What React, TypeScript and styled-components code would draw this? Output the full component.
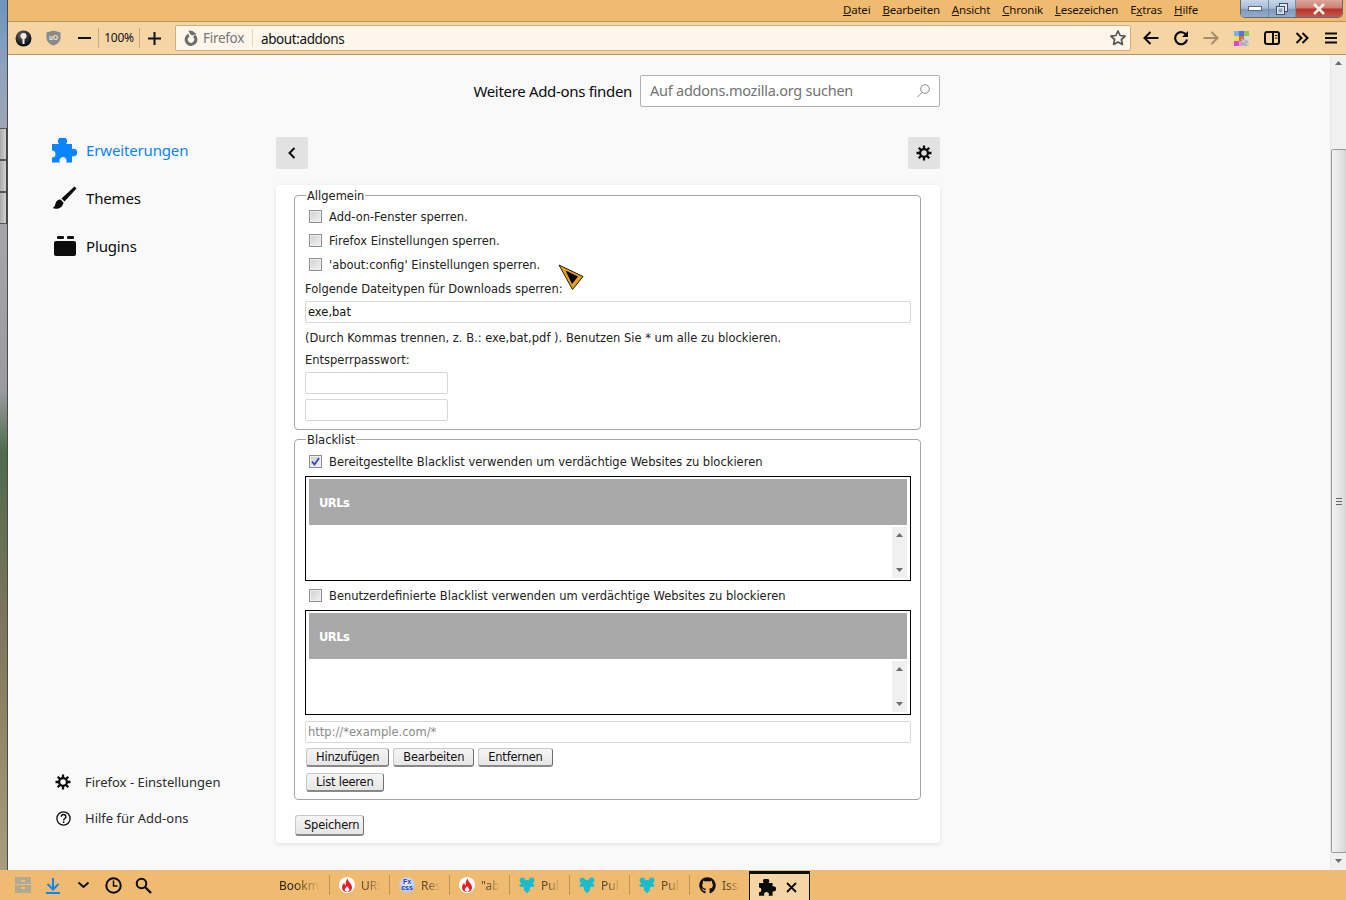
import React from "react";
import styled, { createGlobalStyle } from "styled-components";
import { FaGithub } from "react-icons/fa";

const Global = createGlobalStyle`
  html, body { margin: 0; padding: 0; height: 100%; overflow: hidden; }
  body { font-family: "Noto Sans", "Open Sans", sans-serif; color: #0c0c0d; }
  * { box-sizing: border-box; }
`;

const Page = styled.div`
  width: 1346px; height: 900px; display: flex; overflow: hidden; position: relative; background: #efbb70;
`;
const DesktopEdge = styled.div`
  width: 8px; height: 870px; flex: none; display: flex; flex-direction: column;
  background: linear-gradient(180deg, #6f93bd 0%, #8ea3bd 8%, #a9a9ad 20%, #9a9aa0 45%, #4f6b4b 52%, #7b7458 70%, #a89c80 100%);
  border-right: 1px solid #4a4a4a;
`;
const EdgeTabs = styled.div`
  margin-top: 128px; display: flex; flex-direction: column;
`;
const EdgeTab = styled.div`
  height: 32px; background: linear-gradient(90deg, #aaa, #d2d2d2); border-top: 1px solid #555; border-bottom: 1px solid #555; border-right: 1px solid #444;
`;
const Win = styled.div`
  flex: 1; min-width: 0; display: flex; flex-direction: column; height: 900px;
`;
const MenuBar = styled.div`
  height: 22px; flex: none; background: #efbb70; border-bottom: 1px solid #bb9257;
  display: flex; justify-content: flex-end; align-items: flex-start;
  font-size: 11.5px; color: #1a1407; position: relative;
`;
const Menus = styled.div`
  display: flex; gap: 12px; margin-right: 42px; padding-top: 1px; line-height: 17px; letter-spacing: -0.2px;
  u { text-underline-offset: 1px; }
`;
const Caption = styled.div`
  display: flex; height: 18px; width: 103px; margin-right: 3px; border: 1px solid #5b6b80; border-top: none;
  border-radius: 0 0 5px 5px; overflow: hidden;
`;
const CapBtn = styled.div<{ $w: number; $kind?: string }>`
  width: ${p => p.$w}px; display: flex; align-items: center; justify-content: center;
  border-right: 1px solid #7a8aa0;
  background: ${p => p.$kind === "close"
    ? "linear-gradient(180deg, #d9a79c 0%, #cf7f70 45%, #b73328 55%, #c45a4a 100%)"
    : "linear-gradient(180deg, #c7d6e8 0%, #a9bdd6 48%, #7f99bb 55%, #93acc9 100%)"};
  &:last-child { border-right: none; }
`;
const NavBar = styled.div`
  height: 33px; flex: none; background: #f6d5a5; border-bottom: 1px solid #bb9257;
  display: flex; align-items: center; position: relative;
`;
const NavBtn = styled.div<{ $w?: number }>`
  width: ${p => p.$w ?? 30}px; height: 30px; flex: none; display: flex; align-items: center; justify-content: center;
`;
const ZoomGroup = styled.div`
  display: flex; align-items: center; height: 20px;
`;
const ZoomLabel = styled.div`
  width: 42px; height: 20px; border-left: 1px solid #c9a97a; border-right: 1px solid #c9a97a;
  font-size: 12px; line-height: 20px; text-align: center; color: #111; letter-spacing: -0.25px;
`;
const UrlBar = styled.div`
  width: 956px; height: 26px; flex: none; margin: 0 5px 0 7px; background: #fef6eb;
  border: 1px solid #cfae80; border-radius: 2px; display: flex; align-items: center; padding-left: 7px;
`;
const Identity = styled.div`
  display: flex; align-items: center; gap: 4px; height: 18px; padding-right: 8px; border-right: 1px solid #e3d6c2;
  color: #777; font-size: 13.5px; letter-spacing: -0.3px; line-height: 20px;
`;
const UrlText = styled.div`
  margin-left: 8px; flex: 1; color: #111; font-size: 13.5px; letter-spacing: -0.4px; padding-top: 2px;
`;
const Body = styled.div`
  flex: 1; min-height: 0; display: flex; background: #f9f9fa;
`;
const Content = styled.div`
  flex: 1; min-width: 0; display: flex; position: relative;
`;
const Sidebar = styled.nav`
  width: 268px; flex: none; display: flex; flex-direction: column; justify-content: space-between;
  padding: 71px 0 34px 44px;
`;
const CatList = styled.div` display: flex; flex-direction: column; `;
const Cat = styled.div<{ $active?: boolean }>`
  height: 48px; display: flex; align-items: center; font-size: 15px; letter-spacing: -0.15px; gap: 9px;
  color: ${p => (p.$active ? "#0a84ff" : "#0c0c0d")};
`;
const CatIcon = styled.div`
  width: 25px; height: 25px; display: flex; align-items: center; justify-content: center; flex: none;
`;
const FootList = styled.div` display: flex; flex-direction: column; `;
const Foot = styled.div`
  height: 36px; display: flex; align-items: center; font-size: 13px; color: #2b2b2e; padding-left: 3px; gap: 14px;
`;
const FootIcon = styled.div`
  width: 16px; height: 16px; display: flex; align-items: center; justify-content: center; flex: none;
`;
const Column = styled.main`
  width: 664px; flex: none; display: flex; flex-direction: column; padding-top: 20px;
`;
const SearchRow = styled.div`
  display: flex; justify-content: flex-end; align-items: center; gap: 8px; height: 32px; font-size: 15px; letter-spacing: -0.32px;
`;
const SearchBox = styled.div`
  width: 300px; height: 32px; background: #fff; border: 1px solid #b1b1b3; border-radius: 2px; letter-spacing: -0.24px;
  display: flex; align-items: center; justify-content: space-between; padding: 0 8px 2px 9px; color: #737373; font-size: 14.5px;
`;
const HeadRow = styled.div`
  display: flex; justify-content: space-between; margin-top: 30px;
`;
const SquareBtn = styled.div`
  width: 32px; height: 32px; background: #e2e2e3; border-radius: 2px; display: flex; align-items: center; justify-content: center;
`;
const Card = styled.section`
  margin-top: 16px; height: 658px; background: #fff; border-radius: 3px; box-shadow: 0 1px 4px rgba(12,12,13,.1);
  padding: 2px 19px 0 18px; display: flex; flex-direction: column;
  font-family: "DejaVu Sans", Verdana, sans-serif; font-size: 11.5px; color: #222;
`;
const Field = styled.fieldset<{ $h: number; $gap: number }>`
  margin: 0 0 ${p => p.$gap}px; padding: 0 9px 0 10px; height: ${p => p.$h}px; flex: none; border: 1px solid #a6a6a6; border-radius: 4px; min-inline-size: 0;
`;
const Legend = styled.legend`
  padding: 2px 1px 0; margin-left: 1px; line-height: 14px; font-size: 11.5px;
`;
const CheckRow = styled.label<{ $mt?: number }>`
  display: flex; align-items: center; height: 24px; padding-left: 4px; gap: 7px; margin-top: ${p => p.$mt ?? 0}px;
`;
const CheckText = styled.span`
  padding-top: 2px;
`;
const Box = styled.span<{ $on?: boolean }>`
  width: 13px; height: 13px; flex: none; border: 1px solid #8e8f8f; background: linear-gradient(135deg, #cfcfcf, #f2f2f2);
  box-shadow: inset 0 0 0 1px #eee; display: flex; align-items: center; justify-content: center;
`;
const TextLine = styled.div<{ $h?: number }>`
  height: ${p => p.$h ?? 24}px; line-height: ${p => (p.$h ?? 24) + 2}px; white-space: nowrap;
`;
const Input = styled.div<{ $w?: number; $mute?: boolean; $mt?: number }>`
  height: 22px; width: ${p => (p.$w ? `${p.$w}px` : "100%")}; margin-top: ${p => p.$mt ?? 0}px; border: 1px solid #d8d8d8; border-radius: 2px;
  background: #fff; padding-left: 2px; line-height: 21px; color: ${p => (p.$mute ? "#8a8a8a" : "#111")};
`;
const ListBox = styled.div`
  height: 105px; margin-top: 3px; border: 1px solid #000; padding: 2px 3px; display: flex; flex-direction: column; background: #fff;
`;
const ListHead = styled.div`
  height: 46px; background: #a9a9a9; color: #fff; font-weight: 700; padding-left: 10px; line-height: 49px; flex: none; letter-spacing: -0.5px;
`;
const ListBody = styled.div`
  flex: 1; display: flex; justify-content: flex-end; padding-top: 2px;
`;
const MiniScroll = styled.div`
  width: 15px; background: #f0f0f0; display: flex; flex-direction: column; justify-content: space-between; align-items: center; padding: 6px 0;
  color: #777;
`;
const BtnRow = styled.div<{ $mt: number }>` display: flex; gap: 4px; margin-top: ${p => p.$mt}px; margin-left: 1px; `;
const Btn = styled.button`
  height: 19px; padding: 0 9px; font: inherit; letter-spacing: -0.22px; color: #111; background: linear-gradient(#f5f5f5, #e6e6e6);
  border: 1px solid #c8c8c8; border-right-color: #707070; border-bottom: 2px solid #888; border-radius: 3px; line-height: 15px;
`;
const SaveBtn = styled(Btn)`
  height: 21px; width: 69px; margin: 12px 0 0 1px; padding: 0 0 0 8px; text-align: left;
`;
const Cursor = styled.svg`
  position: absolute; left: 550px; top: 209px;
`;
const Scrollbar = styled.div`
  width: 16px; flex: none; background: #f0f0f0; border-left: 1px solid #e8e8e8; display: flex; flex-direction: column; align-items: center;
`;
const ScrollArrow = styled.div`
  height: 16px; flex: none; display: flex; align-items: center; justify-content: center;
`;
const Thumb = styled.div`
  width: 16px; margin-top: 78px; height: 704px; flex: none; background: linear-gradient(90deg, #f4f4f4, #d8d8d8);
  border: 1px solid #9a9a9a; border-radius: 2px; display: flex; align-items: center; justify-content: center;
`;
const Grip = styled.div`
  width: 6px; height: 7px; border-top: 1px solid #666; border-bottom: 1px solid #666;
  background: linear-gradient(#666, #666) center / 100% 1px no-repeat;
`;
const BottomBar = styled.div`
  height: 30px; flex: none; background: #efbb70; display: flex; align-items: center;
`;
const TabStrip = styled.div` display: flex; height: 30px; margin-left: 112px; `;
const Tab = styled.div<{ $active?: boolean }>`
  width: 60px; height: 30px; flex: none; display: flex; align-items: center; position: relative; padding-left: 9px; gap: 6px; font-size: 12px; color: #555;
  ${p => p.$active
    ? "background:#f6d5a5; border-top:3px solid #0c0c0d; border-left:1px solid #0c0c0d; border-right:1px solid #0c0c0d; height:29px; margin-top:1px; margin-left:-1px; width:61px; color:#111;"
    : ""}
`;
const TabDivider = styled.div`
  position: absolute; right: 0; top: 5px; width: 1px; height: 20px; background: #bf9557;
`;
const TabTitle = styled.div<{ $dark?: boolean }>`
  overflow: hidden; white-space: nowrap; flex: 1; min-width: 0; margin-right: 10px;
  -webkit-mask-image: linear-gradient(90deg, #000 35%, transparent 100%);
  mask-image: linear-gradient(90deg, #000 35%, transparent 100%);
  color: ${p => (p.$dark ? "#2a2008" : "#5b4a30")};
`;
const FxBadge = styled.div`
  width: 16px; height: 16px; border-radius: 50%; flex: none; background: radial-gradient(circle at 50% 40%, #e7eefb, #9fb4e6);
  color: #2a3fb0; font-size: 7px; font-weight: 700; line-height: 6.5px; text-align: center; padding-top: 1.5px; font-family: "Liberation Sans", sans-serif;
`;

const S = (p: React.SVGProps<SVGSVGElement> & { size?: number }) => {
  const { size = 16, children, ...r } = p;
  return <svg width={size} height={size} viewBox="0 0 16 16" fill="none" {...r}>{children}</svg>;
};

const Gear = ({ size = 16, hole = "#f9f9fa" }: { size?: number; hole?: string }) => (
  <S size={size}>
    <path d="M8 .5v3.500M8 12v3.500M.5 8H4M12 8h3.500M2.700 2.700 5 5M11 11l2.300 2.300M13.300 2.700 11 5M5 11l-2.300 2.300" stroke="#0c0c0d" strokeWidth="2.300" />
    <circle cx="8" cy="8" r="3.900" stroke="#0c0c0d" strokeWidth="2.200" fill={hole} />
  </S>
);
const Puzzle = ({ size, color }: { size: number; color: string }) => (
  <svg width={size} height={size} viewBox="0 0 25 25">
    <path d="M0 6H7A4.500 4.500 0 1 1 14 6H20V11A3.800 3.800 0 1 1 20 18V24.500H14A3.500 3.500 0 1 0 8 24.500H0V19.500A3.500 3.500 0 1 0 0 12.500Z" fill={color} />
  </svg>
);
const Brush = () => (
  <svg width="25" height="24" viewBox="0 0 25 24">
    <path d="M22.500 .5 24.500 2.500 12.500 15.500 9.500 12.500Z" fill="#0c0c0d" />
    <path d="M8.500 13.500C5.500 13.500 4 15.500 3.500 17.500C3 19.500 2.500 21 .5 22C4.500 24 10.500 22.500 11.500 16.500Z" fill="#0c0c0d" />
  </svg>
);
const Team = () => (
  <svg width="16" height="17" viewBox="0 0 16 17">
    <path d="M1 1.500C2.500 0 4.500 0 5.500 1.500L6.500 3H9.500L10.500 1.500C11.500 0 13.500 0 15 1.500C16 3 15.500 5 14 6V7C15.500 7.500 16 8.500 15 9.500C13.800 10.500 12.500 10 12 9.500L11 11V13L8 16.500L5 13V11L4 9.500C3.500 10 2.200 10.500 1 9.500C0 8.500 .5 7.500 2 7V6C.5 5 0 3 1 1.500Z" fill="#18bdd0" />
  </svg>
);
const Fire = () => (
  <svg width="16" height="16" viewBox="0 0 16 16">
    <circle cx="8" cy="8" r="8" fill="#fff" />
    <path d="M8.500 1.500C9 5 13 6.500 13 10.500C13 13.300 10.800 15 8 15C5.200 15 3 13.300 3 10.500C3 8.500 4 7 5.300 5.800C5.400 7.300 6 8 6.800 8.300C6.500 6 7 3.500 8.500 1.500Z" fill="#e8222d" />
    <path d="M8 9C8.500 10.500 10.300 11 10.300 12.800C10.300 14 9.200 14.700 8 14.700C6.800 14.700 5.700 14 5.700 12.800C5.700 11.500 7.500 10.800 8 9Z" fill="#fff" />
  </svg>
);
const menus: [string, string, string][] = [
  ["", "D", "atei"], ["", "B", "earbeiten"], ["", "A", "nsicht"], ["", "C", "hronik"],
  ["", "L", "esezeichen"], ["E", "x", "tras"], ["", "H", "ilfe"],
];
const UpTri = () => <svg width="7" height="4" viewBox="0 0 7 4"><path d="M3.500 0 7 4H0Z" fill="#6d6d6d" /></svg>;
const DownTri = () => <svg width="7" height="4" viewBox="0 0 7 4"><path d="M0 0h7L3.500 4Z" fill="#6d6d6d" /></svg>;

const UrlList = () => (
  <ListBox>
    <ListHead>URLs</ListHead>
    <ListBody>
      <MiniScroll><UpTri /><DownTri /></MiniScroll>
    </ListBody>
  </ListBox>
);

const paletteCells = ["#6bb6f2", "#5a6fd8", "#8ecb4a", "#f4e04a", "#e8653a", "#d9d9d9", "#d24bd6", "#d9a0d0", "#cfcfcf"];

export default function App() {
  return (
    <Page>
      <Global />
      <DesktopEdge>
        <EdgeTabs><EdgeTab /><EdgeTab /><EdgeTab /></EdgeTabs>
      </DesktopEdge>
      <Win>
        <MenuBar>
          <Menus>
            {menus.map(([a, b, c]) => <span key={b + c}>{a}<u>{b}</u>{c}</span>)}
          </Menus>
          <Caption>
            <CapBtn $w={28}><svg width="14" height="5"><rect x=".5" y=".5" width="13" height="4" fill="#fff" stroke="#5a6a80" /></svg></CapBtn>
            <CapBtn $w={27}><svg width="12" height="12"><rect x="3.500" y=".5" width="8" height="8" fill="#dfe8f2" stroke="#3f4f66" /><rect x=".5" y="3.500" width="8" height="8" fill="#dfe8f2" stroke="#3f4f66" /><rect x="2.500" y="5.500" width="4" height="4" fill="#8ba2bf" /></svg></CapBtn>
            <CapBtn $w={46} $kind="close"><svg width="14" height="12" viewBox="0 0 14 12"><path d="M2 1l10 10M12 1 2 11" stroke="#eee" strokeWidth="2.600" /></svg></CapBtn>
          </Caption>
        </MenuBar>
        <NavBar>
          <NavBtn>
            <svg width="17" height="17" viewBox="0 0 17 17">
              <defs><radialGradient id="k" cx="40%" cy="30%" r="70%"><stop offset="0" stopColor="#666" /><stop offset="1" stopColor="#050505" /></radialGradient></defs>
              <circle cx="8.500" cy="8.500" r="8" fill="url(#k)" />
              <circle cx="8.500" cy="6" r="3" fill="#eee" />
              <rect x="7.500" y="7" width="2" height="7" fill="#eee" />
            </svg>
          </NavBtn>
          <NavBtn>
            <svg width="15" height="16" viewBox="0 0 15 16">
              <path d="M7.500.5 14.500 2.500V8c0 3.500-3 6.200-7 7.500C3.500 14.200.5 11.500.5 8V2.500Z" fill="#8a8a8a" />
              <text x="7.500" y="9.800" fontSize="6.500" fontWeight="700" textAnchor="middle" fill="#eee" fontFamily="Liberation Sans">uO</text>
            </svg>
          </NavBtn>
          <ZoomGroup>
            <NavBtn><svg width="13" height="14" style={{ marginLeft: 2 }}><rect y="6" width="13" height="2" fill="#111" /></svg></NavBtn>
            <ZoomLabel>100%</ZoomLabel>
            <NavBtn $w={28}><svg width="15" height="15"><path d="M7.500 1v13M1 7.500h13" stroke="#111" strokeWidth="2" /></svg></NavBtn>
          </ZoomGroup>
          <UrlBar>
            <Identity>
              <svg width="16" height="16" viewBox="0 0 16 16">
                <circle cx="8" cy="9.500" r="4.800" fill="none" stroke="#6d6d6d" strokeWidth="3.200" strokeDasharray="24 7" transform="rotate(-50 8 9.500)" />
                <path d="M5.500 .5 9.500 1 13.500 4 9 5.500 7 4Z" fill="#6d6d6d" />
              </svg>
              Firefox
            </Identity>
            <UrlText>about:addons</UrlText>
            <svg width="18" height="18" viewBox="0 0 18 18" style={{ marginRight: 3 }}>
              <path d="M9 2l2.100 4.500 5 .6-3.700 3.400 1 4.900L9 13l-4.400 2.400 1-4.900L1.900 7.100l5-.6Z" fill="none" stroke="#555" strokeWidth="1.700" strokeLinejoin="round" />
            </svg>
          </UrlBar>
          <NavBtn>
            <svg width="16" height="14" viewBox="0 0 16 14"><path d="M15.500 7H2M7.500 1 1.500 7l6 6" fill="none" stroke="#0c0c0d" strokeWidth="2" /></svg>
          </NavBtn>
          <NavBtn>
            <svg width="16" height="16" viewBox="0 0 16 16"><path d="M13.500 5.500A6 6 0 1 0 14 9.500" fill="none" stroke="#0c0c0d" strokeWidth="2.200" /><path d="M15 1v6H9Z" fill="#0c0c0d" /></svg>
          </NavBtn>
          <NavBtn>
            <svg width="16" height="14" viewBox="0 0 16 14"><path d="M.5 7H14M8.500 1l6 6-6 6" fill="none" stroke="#a38d6c" strokeWidth="2" /></svg>
          </NavBtn>
          <NavBtn>
            <svg width="15" height="15" viewBox="0 0 15 15">
              {paletteCells.map((c, i) => <rect key={i} x={(i % 3) * 5} y={Math.floor(i / 3) * 5} width="5" height="5" fill={c} />)}
              <path d="M7 7l7 3.500-3 .8 2 3-1.500 .7-1.500-3-2 1.500Z" fill="#c8c8c8" stroke="#888" strokeWidth=".5" />
            </svg>
          </NavBtn>
          <NavBtn $w={31}>
            <svg width="16" height="14" viewBox="0 0 16 14"><rect x="1" y="1" width="14" height="12" rx="2" fill="none" stroke="#0c0c0d" strokeWidth="2" /><rect x="8" y="1" width="2" height="12" fill="#0c0c0d" /><path d="M11 4.500h2.500M11 7h2.500" stroke="#0c0c0d" /></svg>
          </NavBtn>
          <NavBtn $w={29}>
            <svg width="14" height="12" viewBox="0 0 14 12"><path d="M1.500 1l5 5-5 5M7.500 1l5 5-5 5" fill="none" stroke="#0c0c0d" strokeWidth="2" /></svg>
          </NavBtn>
          <NavBtn $w={30}>
            <svg width="14" height="12" viewBox="0 0 14 12"><path d="M1 1.500h12M1 6h12M1 10.500h12" stroke="#0c0c0d" strokeWidth="2" /></svg>
          </NavBtn>
        </NavBar>
        <Body>
          <Content>
            <Sidebar>
              <CatList>
                <Cat $active><CatIcon><Puzzle size={25} color="#0a84ff" /></CatIcon>Erweiterungen</Cat>
                <Cat><CatIcon><Brush /></CatIcon>Themes</Cat>
                <Cat>
                  <CatIcon>
                    <svg width="22" height="20" viewBox="0 0 22 20">
                      <rect x="0" y="5" width="22" height="15" rx="2" fill="#0c0c0d" />
                      <rect x="3" y="0" width="7" height="3" rx="1" fill="#0c0c0d" />
                      <rect x="13" y="0" width="7" height="3" rx="1" fill="#0c0c0d" />
                    </svg>
                  </CatIcon>
                  Plugins
                </Cat>
              </CatList>
              <FootList>
                <Foot><FootIcon><Gear size={16} /></FootIcon>Firefox - Einstellungen</Foot>
                <Foot>
                  <FootIcon>
                    <svg width="15" height="15" viewBox="0 0 15 15">
                      <circle cx="7.500" cy="7.500" r="6.600" fill="none" stroke="#0c0c0d" strokeWidth="1.300" />
                      <path d="M5.200 5.700c0-3 4.700-3 4.700 0 0 1.800-2.300 1.800-2.300 3.700" fill="none" stroke="#0c0c0d" strokeWidth="1.400" />
                      <rect x="6.800" y="10.400" width="1.600" height="1.600" fill="#0c0c0d" />
                    </svg>
                  </FootIcon>
                  Hilfe für Add-ons
                </Foot>
              </FootList>
            </Sidebar>
            <Column>
              <SearchRow>
                Weitere Add-ons finden
                <SearchBox>
                  Auf addons.mozilla.org suchen
                  <svg width="15" height="15" viewBox="0 0 15 15"><circle cx="9" cy="6" r="4.300" fill="none" stroke="#8a8a8a" /><path d="M6 9.500 1.500 14" stroke="#8a8a8a" /></svg>
                </SearchBox>
              </SearchRow>
              <HeadRow>
                <SquareBtn><svg width="8" height="12" viewBox="0 0 8 12"><path d="M6.500 1 1.500 6l5 5" fill="none" stroke="#0c0c0d" strokeWidth="2" /></svg></SquareBtn>
                <SquareBtn><Gear size={16} hole="#e2e2e3" /></SquareBtn>
              </HeadRow>
              <Card>
                <Field $h={243} $gap={1}>
                  <Legend>Allgemein</Legend>
                  <CheckRow $mt={1}><Box /><CheckText>Add-on-Fenster sperren.</CheckText></CheckRow>
                  <CheckRow><Box /><CheckText>Firefox Einstellungen sperren.</CheckText></CheckRow>
                  <CheckRow><Box /><CheckText>'about:config' Einstellungen sperren.</CheckText></CheckRow>
                  <TextLine $h={25}>Folgende Dateitypen für Downloads sperren:</TextLine>
                  <Input>exe,bat</Input>
                  <TextLine $h={28}>(Durch Kommas trennen, z. B.: exe,bat,pdf ). Benutzen Sie * um alle zu blockieren.</TextLine>
                  <TextLine $h={17}>Entsperrpasswort:</TextLine>
                  <Input $w={143} $mt={4} />
                  <Input $w={143} $mt={5} />
                </Field>
                <Field $h={369} $gap={3}>
                  <Legend>Blacklist</Legend>
                  <CheckRow $mt={2}>
                    <Box $on>
                      <svg width="9" height="9" viewBox="0 0 9 9"><path d="M1 4.500 3.500 7.500 8 1" fill="none" stroke="#2c4bb5" strokeWidth="1.800" /></svg>
                    </Box>
                    <CheckText>Bereitgestellte Blacklist verwenden um verdächtige Websites zu blockieren</CheckText>
                  </CheckRow>
                  <UrlList />
                  <CheckRow $mt={2}><Box /><CheckText>Benutzerdefinierte Blacklist verwenden um verdächtige Websites zu blockieren</CheckText></CheckRow>
                  <UrlList />
                  <Input $mute $mt={6}>http://*example.com/*</Input>
                  <BtnRow $mt={5}><Btn>Hinzufügen</Btn><Btn>Bearbeiten</Btn><Btn>Entfernen</Btn></BtnRow>
                  <BtnRow $mt={6}><Btn>List leeren</Btn></BtnRow>
                </Field>
                <div><SaveBtn>Speichern</SaveBtn></div>
              </Card>
              <Cursor width="26" height="27" viewBox="0 0 26 27">
                <path d="M1 1 25 12.500 14.500 25.500Z" fill="#e5a11c" stroke="#2a1c00" strokeWidth="1" strokeLinejoin="round" />
                <path d="M7.500 6.500 20 12.500 14 20Z" fill="#000" />
              </Cursor>
            </Column>
          </Content>
          <Scrollbar>
            <ScrollArrow><UpTri /></ScrollArrow>
            <Thumb><Grip /></Thumb>
            <ScrollArrow><DownTri /></ScrollArrow>
          </Scrollbar>
        </Body>
        <BottomBar>
          <NavBtn>
            <svg width="16" height="16" viewBox="0 0 16 16"><rect width="16" height="16" fill="#b0a994" /><path d="M0 7.500h16" stroke="#efbb70" /><rect x="6" y="3" width="4" height="2" fill="#efbb70" /><rect x="6" y="10" width="4" height="2" fill="#efbb70" /></svg>
          </NavBtn>
          <NavBtn>
            <svg width="16" height="17" viewBox="0 0 16 17"><path d="M8 1v11M2.500 7l5.500 5.500L13.500 7" fill="none" stroke="#0a84ff" strokeWidth="2" /><rect x="1" y="15" width="14" height="2" fill="#0a84ff" /></svg>
          </NavBtn>
          <NavBtn>
            <svg width="13" height="8" viewBox="0 0 13 8"><path d="M1.500 1.500 6.500 6l5-4.500" fill="none" stroke="#0c0c0d" strokeWidth="2" /></svg>
          </NavBtn>
          <NavBtn>
            <svg width="17" height="17" viewBox="0 0 17 17"><circle cx="8.500" cy="8.500" r="7.200" fill="none" stroke="#0c0c0d" strokeWidth="2" /><path d="M8.500 3.500v5.500h4" fill="none" stroke="#0c0c0d" strokeWidth="1.500" /></svg>
          </NavBtn>
          <NavBtn>
            <svg width="17" height="17" viewBox="0 0 17 17"><circle cx="6.500" cy="6.500" r="4.800" fill="none" stroke="#0c0c0d" strokeWidth="2" /><path d="M10 10l6 6" stroke="#0c0c0d" strokeWidth="2.400" /></svg>
          </NavBtn>
          <TabStrip>
            <Tab><TabTitle $dark>Bookm</TabTitle><TabDivider /></Tab>
            <Tab><Fire /><TabTitle>URL</TabTitle><TabDivider /></Tab>
            <Tab><FxBadge>Fx<br />css</FxBadge><TabTitle>Res</TabTitle><TabDivider /></Tab>
            <Tab><Fire /><TabTitle>"ab</TabTitle><TabDivider /></Tab>
            <Tab><Team /><TabTitle>Pul</TabTitle><TabDivider /></Tab>
            <Tab><Team /><TabTitle>Pul</TabTitle><TabDivider /></Tab>
            <Tab><Team /><TabTitle>Pul</TabTitle><TabDivider /></Tab>
            <Tab><FaGithub size={17} color="#111" /><TabTitle>Issu</TabTitle><TabDivider /></Tab>
            <Tab $active>
              <Puzzle size={17} color="#0c0c0d" />
              <svg width="11" height="11" viewBox="0 0 11 11" style={{ marginLeft: 4 }}><path d="M1 1l9 9M10 1l-9 9" stroke="#0c0c0d" strokeWidth="1.800" /></svg>
            </Tab>
          </TabStrip>
        </BottomBar>
      </Win>
    </Page>
  );
}
